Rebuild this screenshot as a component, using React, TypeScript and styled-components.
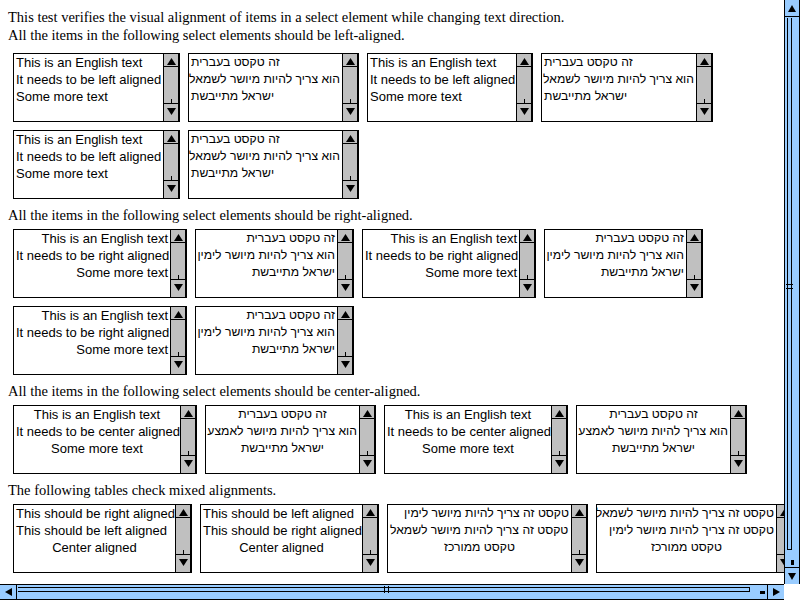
import React from "react";
import styled, { createGlobalStyle } from "styled-components";

type Align = "left" | "right" | "center";
type Dir = "ltr" | "rtl";
type Opt = { text: string; align: Align };
type Box = { w: number; dir: Dir; options: Opt[] };

const GlobalStyle = createGlobalStyle`
  html, body { margin: 0; padding: 0; background: #fff; }
  body { width: 800px; height: 600px; overflow: hidden; }
`;

const Window = styled.div`
  width: 800px;
  height: 600px;
  display: grid;
  grid-template-columns: 784px 16px;
  grid-template-rows: 584px 16px;
  background: #fff;
`;

const Page = styled.main`
  overflow: hidden;
  padding: 8px 0 0 8px;
  font-family: "Liberation Serif", "Times New Roman", serif;
  font-size: 14.5px;
  line-height: 18px;
  color: #000;
`;

const TextLine = styled.div<{ $gap?: number }>`
  margin-top: ${(p) => p.$gap ?? 0}px;
  white-space: nowrap;
`;

const Group = styled.div<{ $gap: number }>`
  margin-top: ${(p) => p.$gap}px;
  padding-left: 5px;
  display: flex;
  flex-direction: column;
  gap: 8px;
`;

const Row = styled.div`
  display: flex;
  gap: 8px;
  flex-wrap: nowrap;
`;

const ListBox = styled.div<{ $w: number }>`
  flex: none;
  width: ${(p) => p.$w}px;
  height: 69px;
  box-sizing: border-box;
  border: 1px solid #000;
  background: #fff;
  display: flex;
  direction: ltr;
`;

const Options = styled.div<{ $dir: Dir }>`
  flex: 1;
  min-width: 0;
  overflow: hidden;
  direction: ${(p) => p.$dir};
  font-family: "Liberation Sans", Arial, "DejaVu Sans", sans-serif;
  font-size: ${(p) => (p.$dir === "rtl" ? "12.2px" : "13px")};
  line-height: 17px;
`;

const Option = styled.div<{ $align: Align }>`
  padding: 0 2px;
  text-align: ${(p) => p.$align};
  white-space: nowrap;
`;

/* list box scrollbar (grey) */
const ListScroll = styled.div`
  flex: none;
  width: 16px;
  box-sizing: border-box;
  border-left: 1px solid #000;
  border-right: 1px solid #000;
  background: #c0c0c0;
  display: flex;
  flex-direction: column;
`;

const ListButton = styled.div<{ $h: number; $line: "top" | "bottom" }>`
  flex: none;
  height: ${(p) => p.$h - 4}px;
  padding-top: 4px;
  ${(p) => (p.$line === "top" ? "border-top" : "border-bottom")}: 1px solid #000;
  display: flex;
  align-items: flex-start;
  justify-content: center;
`;

const ListTrack = styled.div`
  flex: 1;
  display: flex;
  flex-direction: column;
  justify-content: flex-end;
  align-items: center;
`;

const ListTick = styled.div`
  width: 1px;
  height: 4px;
  background: #000;
`;

/* page scrollbars (blue) */
const VBar = styled.div`
  box-sizing: border-box;
  border-left: 1px solid #000;
  border-right: 1px solid #000;
  background: #99ccff;
  display: flex;
  flex-direction: column;
`;

const HBar = styled.div`
  box-sizing: border-box;
  border-top: 1px solid #000;
  border-bottom: 1px solid #000;
  background: #99ccff;
  display: flex;
`;

const BarButton = styled.div<{ $side: "top" | "bottom" | "left" | "right" }>`
  flex: none;
  ${(p) =>
    p.$side === "top" || p.$side === "bottom" ? "height: 16px;" : "width: 16px;"}
  border-${(p) =>
    ({ top: "bottom", bottom: "top", left: "right", right: "left" }[p.$side])}: 1px solid #000;
  display: flex;
  align-items: center;
  justify-content: center;
`;

const VTrack = styled.div`
  flex: 1;
  display: flex;
  flex-direction: column;
  align-items: flex-start;
  padding: 1px 0 2px 2px;
`;

const VThumb = styled.div`
  flex: 1;
  width: 5px;
  box-sizing: border-box;
  border-left: 1px solid #000;
  border-right: 1px solid #000;
  border-bottom: 1px solid #000;
  position: relative;
  &::after {
    content: "";
    position: absolute;
    left: -2px;
    right: -2px;
    top: 50%;
    height: 3px;
    border-top: 1px solid #000;
    border-bottom: 1px solid #000;
  }
`;

const VNotch = styled.div`
  flex: none;
  width: 3px;
  height: 5px;
  margin: 10px 0 0 4px;
  background: #000;
`;

const HTrack = styled.div`
  flex: 1;
  display: flex;
  align-items: flex-start;
  padding: 2px 2px 0 1px;
`;

const HThumb = styled.div`
  flex: 1;
  height: 5px;
  box-sizing: border-box;
  border-top: 1px solid #000;
  border-bottom: 1px solid #000;
  border-right: 1px solid #000;
  position: relative;
  &::after {
    content: "";
    position: absolute;
    top: -2px;
    bottom: -2px;
    left: 50%;
    width: 3px;
    border-left: 1px solid #000;
    border-right: 1px solid #000;
  }
`;

const HNotch = styled.div`
  flex: none;
  width: 5px;
  height: 3px;
  margin: 4px 0 0 10px;
  background: #000;
`;

const Corner = styled.div`
  background: #fff;
`;

const Tri = ({ dir, w = 9, h = 7 }: { dir: "up" | "down" | "left" | "right"; w?: number; h?: number }) => {
  const pts =
    dir === "up"
      ? `0,${h} ${w / 2},0 ${w},${h}`
      : dir === "down"
      ? `0,0 ${w},0 ${w / 2},${h}`
      : dir === "left"
      ? `${w},0 ${w},${h} 0,${h / 2}`
      : `0,0 0,${h} ${w},${h / 2}`;
  return (
    <svg width={w} height={h} viewBox={`0 0 ${w} ${h}`} style={{ display: "block" }}>
      <polygon points={pts} fill="#000" />
    </svg>
  );
};

const ListBoxView = ({ box }: { box: Box }) => (
  <ListBox $w={box.w}>
    <Options $dir={box.dir}>
      {box.options.map((o, i) => (
        <Option key={i} $align={o.align}>
          {o.text}
        </Option>
      ))}
    </Options>
    <ListScroll>
      <ListButton $h={12} $line="bottom">
        <Tri dir="up" />
      </ListButton>
      <ListTrack>
        <ListTick />
      </ListTrack>
      <ListButton $h={17} $line="top">
        <Tri dir="down" />
      </ListButton>
    </ListScroll>
  </ListBox>
);

const en = (word: string, align: Align, w: number): Box => ({
  w,
  dir: "ltr",
  options: [
    { text: "This is an English text", align },
    { text: `It needs to be ${word} aligned`, align },
    { text: "Some more text", align },
  ],
});

const he = (word: string, align: Align, w: number): Box => ({
  w,
  dir: "rtl",
  options: [
    { text: "זה טקסט בעברית", align },
    { text: `הוא צריך להיות מיושר ${word}`, align },
    { text: "ישראל מתייבשת", align },
  ],
});

const leftRows: Box[][] = [
  [en("left", "left", 167), he("לשמאל", "left", 171), en("left", "left", 166), he("לשמאל", "left", 172)],
  [en("left", "left", 167), he("לשמאל", "left", 171)],
];

const rightRows: Box[][] = [
  [en("right", "right", 174), he("לימין", "right", 159), en("right", "right", 174), he("לימין", "right", 159)],
  [en("right", "right", 174), he("לימין", "right", 159)],
];

const centerRows: Box[][] = [
  [en("center", "center", 184), he("לאמצע", "center", 171), en("center", "center", 184), he("לאמצע", "center", 171)],
];

const mixedRows: Box[][] = [
  [
    {
      w: 179,
      dir: "ltr",
      options: [
        { text: "This should be right aligned", align: "right" },
        { text: "This should be left aligned", align: "left" },
        { text: "Center aligned", align: "center" },
      ],
    },
    {
      w: 179,
      dir: "ltr",
      options: [
        { text: "This should be left aligned", align: "left" },
        { text: "This should be right aligned", align: "right" },
        { text: "Center aligned", align: "center" },
      ],
    },
    {
      w: 201,
      dir: "rtl",
      options: [
        { text: "טקסט זה צריך להיות מיושר לימין", align: "right" },
        { text: "טקסט זה צריך להיות מיושר לשמאל", align: "left" },
        { text: "טקסט ממורכז", align: "center" },
      ],
    },
    {
      w: 197,
      dir: "rtl",
      options: [
        { text: "טקסט זה צריך להיות מיושר לשמאל", align: "left" },
        { text: "טקסט זה צריך להיות מיושר לימין", align: "right" },
        { text: "טקסט ממורכז", align: "center" },
      ],
    },
  ],
];

const Section = ({ rows, gap }: { rows: Box[][]; gap: number }) => (
  <Group $gap={gap}>
    {rows.map((r, i) => (
      <Row key={i}>
        {r.map((b, j) => (
          <ListBoxView key={j} box={b} />
        ))}
      </Row>
    ))}
  </Group>
);

export default function App() {
  return (
    <>
      <GlobalStyle />
      <Window>
        <Page>
          <TextLine>
            This test verifies the visual alignment of items in a select element while changing text direction.
          </TextLine>
          <TextLine>All the items in the following select elements should be left-aligned.</TextLine>
          <Section rows={leftRows} gap={9} />
          <TextLine $gap={7}>All the items in the following select elements should be right-aligned.</TextLine>
          <Section rows={rightRows} gap={5} />
          <TextLine $gap={7}>All the items in the following select elements should be center-aligned.</TextLine>
          <Section rows={centerRows} gap={5} />
          <TextLine $gap={7}>The following tables check mixed alignments.</TextLine>
          <Section rows={mixedRows} gap={5} />
        </Page>
        <VBar>
          <BarButton $side="top">
            <Tri dir="up" w={8} h={7} />
          </BarButton>
          <VTrack>
            <VThumb />
            <VNotch />
          </VTrack>
          <BarButton $side="bottom">
            <Tri dir="down" w={8} h={7} />
          </BarButton>
        </VBar>
        <HBar>
          <BarButton $side="left">
            <Tri dir="left" w={7} h={8} />
          </BarButton>
          <HTrack>
            <HThumb />
            <HNotch />
          </HTrack>
          <BarButton $side="right">
            <Tri dir="right" w={7} h={8} />
          </BarButton>
        </HBar>
        <Corner />
      </Window>
    </>
  );
}
